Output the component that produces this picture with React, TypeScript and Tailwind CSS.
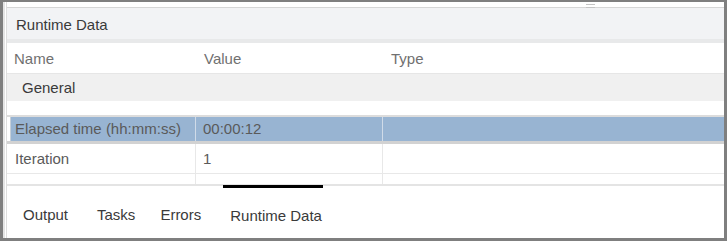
const FONT = "font-['Liberation_Sans',Arial,sans-serif]";

const TABS = [
  { label: "Output", ml: "ml-[16px]" },
  { label: "Tasks", ml: "ml-[29px]" },
  { label: "Errors", ml: "ml-[25px]" },
];

export default function App() {
  return (
    <div
      className={`relative w-[727px] h-[241px] bg-white border-[#7f7f7f] border-t-2 border-l-[3px] border-r-[3px] border-b-[3px] text-[15px] ${FONT}`}
    >
      {/* resize grip */}
      <div className="absolute left-[583px] top-[2px] flex flex-col gap-[2px]">
        <div className="w-[9px] h-px bg-[#c4c4c4]" />
        <div className="w-[9px] h-px bg-[#c4c4c4]" />
      </div>

      <div className="flex h-full">
        <div className="w-[2px] shrink-0 bg-[#e4e4e4]" />
        <div className="w-px shrink-0 bg-white" />
        <div className="flex-1 flex flex-col border-l border-[#dedede] min-w-0">
          <div className="h-[5px] bg-white" />

          {/* panel header */}
          <div className="h-[36px] border-t border-[#d6d6d6] bg-[#f2f3f5] border-b-[4px] border-b-[#e8e9ea] flex items-center pl-[9px] pt-[3px] text-[#3a3a3a]">
            Runtime Data
          </div>

          {/* column headers */}
          <div className="h-[31px] flex items-center pt-[3px] border-b border-[#e6e6e6] text-[#707070]">
            <div className="w-[189px] pl-[7px]">Name</div>
            <div className="w-[187px] pl-[8px]">Value</div>
            <div className="pl-[8px]">Type</div>
          </div>

          {/* group row */}
          <div className="h-[27px] flex items-center pt-[1px] bg-[#f0f0f0] pl-[15px] text-[#3a3a3a]">
            General
          </div>

          <div className="h-[14px] bg-white" />

          {/* selected row */}
          <div className="h-[29px] flex border-t-2 border-[#dcdcdc] border-b-[3px] border-b-[#d2d2d2] text-[#5a5a5a]">
            <div className="w-[189px] flex items-center pl-[3px] border-r border-[#d0dbe8]">
              <div className="h-full w-full flex items-center bg-[#98b4d2] pl-[4px] pt-[1px] border-l border-[#c6cfd9]">
                Elapsed time (hh:mm:ss)
              </div>
            </div>
            <div className="w-[187px] flex items-center bg-[#98b4d2] pl-[7px] pt-[1px] border-r border-[#d0dbe8]">
              00:00:12
            </div>
            <div className="flex-1 bg-[#98b4d2]" />
          </div>

          {/* iteration row */}
          <div className="h-[30px] flex border-b border-[#e8e8e8] text-[#5a5a5a]">
            <div className="w-[189px] flex items-center pl-[8px] pt-[2px] border-r border-[#e8e8e8]">
              Iteration
            </div>
            <div className="w-[187px] flex items-center pl-[7px] pt-[2px] border-r border-[#e8e8e8]">
              1
            </div>
            <div className="flex-1" />
          </div>

          {/* partial row */}
          <div className="h-[12px] flex border-b-2 border-[#e4e4e4]">
            <div className="w-[189px] border-r border-[#e8e8e8]" />
            <div className="w-[187px] border-r border-[#e8e8e8]" />
          </div>

          {/* tabs */}
          <div className="flex-1 flex items-stretch text-[#3a3a3a]">
            {TABS.map((t) => (
              <div key={t.label} className={`${t.ml} flex items-center pt-[7px]`}>
                {t.label}
              </div>
            ))}
            <div className="ml-[22px] w-[100px] flex items-center pl-[7px] pt-[7px] border-t-[3px] border-black -mt-px">
              Runtime Data
            </div>
          </div>
        </div>
      </div>
    </div>
  );
}
